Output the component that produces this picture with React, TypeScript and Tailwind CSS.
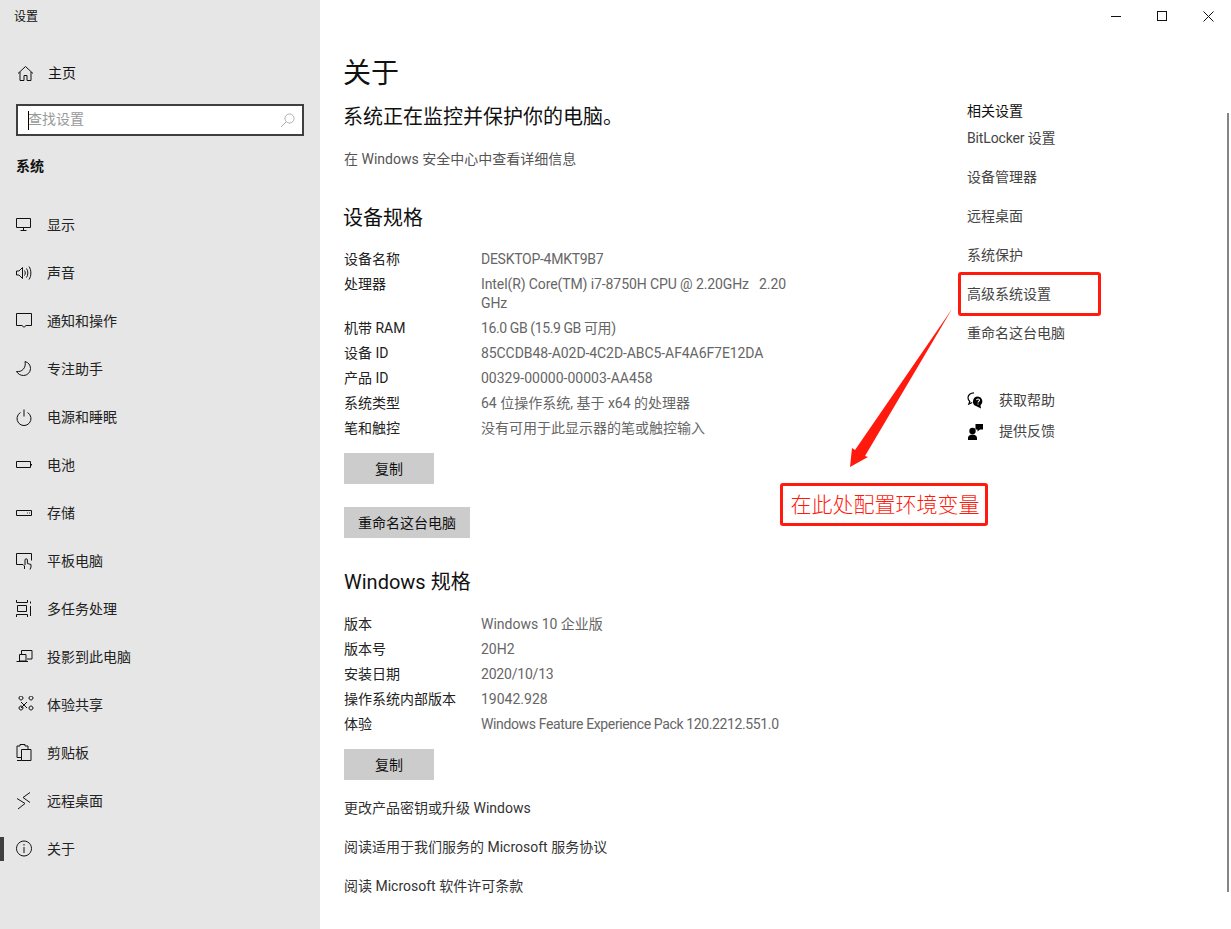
import type { ReactNode } from "react";

const font = { fontFamily: 'Roboto, "Noto Sans CJK SC", sans-serif' };

function Ico({ children }: { children: ReactNode }) {
  return (
    <svg width="18" height="18" viewBox="0 0 18 18" fill="none" stroke="#111" strokeWidth="1" className="shrink-0">
      {children}
    </svg>
  );
}

const navItems: { label: string; icon: ReactNode }[] = [
  { label: "显示", icon: <path d="M.5 2.500h14v9h-14zM7.500 11.500v2.500M4.500 14.500h6" /> },
  {
    label: "声音",
    icon: <path d="M.5 7h2.500L6.500 3.500v11L3 11H.5zM8.500 6.500c1 1.500 1 3.500 0 5M10.500 4.500c1.800 2.500 1.800 6.500 0 9M13 2.500c2.500 3.500 2.500 9.500 0 13" />,
  },
  { label: "通知和操作", icon: <path d="M.5 1.500h15v12h-5.500l-2 1.800-2-1.800h-5.500z" /> },
  { label: "专注助手", icon: <path d="M9 1.500c3.500 1 5.500 3.500 5.500 7a7 7 0 0 1-7 7c-3 0-5.500-1.500-7-4 5 1 10-3.500 8.500-10z" /> },
  { label: "电源和睡眠", icon: <path d="M8 1.500v7M4.500 4.500a7 7 0 1 0 7 0" /> },
  { label: "电池", icon: <path d="M.5 5.500h14v6h-14zM15.500 8v1.500" /> },
  { label: "存储", icon: <path d="M.5 6.500h15v5h-15zM11 9h.8M13 9h.8" /> },
  { label: "平板电脑", icon: <path d="M7 12.500h-6.500v-11h15v7M8.500 17v-3L7 12.500M9 13v-5a1.200 1.200 0 0 1 2.400 0v3.500l3.600 1v2.500l-1 2.500" /> },
  { label: "多任务处理", icon: <path d="M.5 0v2.500h11v-2.500M.5 17v-2.500h11v2.500M1.500 5.500h9v6h-9zM14.500 1.500v2M14.500 6v10" /> },
  { label: "投影到此电脑", icon: <path d="M5.500 6v-3.500h10.500v8.500h-5M3.500 6.500h6.500v6.500h-6.500zM.5 13.500h11.500" /> },
  {
    label: "体验共享",
    icon: <path d="M5 6l6 6M11 6l-6 6M3 2a2 2 0 1 1 0 .01zM13 2a2 2 0 1 1 0 .01zM3 12a2 2 0 1 1 0 .01zM13 12a2 2 0 1 1 0 .01z" />,
  },
  { label: "剪贴板", icon: <path d="M5.500 13.500h-4.500v-11.500h3v-1.500h5v1.500h3v3M5.500 5.500h9.500v11h-9.500zM1 16.500h4.500" /> },
  { label: "远程桌面", icon: <path d="M1 6.500l8 5-7 5.500M14 .5l-7 5 7 5" /> },
  { label: "关于", icon: <path d="M8 1a7.500 7.500 0 1 0 .01 0zM8 7v6M8 4v1.500" /> },
];

// third item: tracking so the Roboto runs end where the Segoe ones do
const deviceSpecs = [
  ["设备名称", "DESKTOP-4MKT9B7", "tracking-[-0.27px]"],
  ["处理器", "Intel(R) Core(TM) i7-8750H CPU @ 2.20GHz   2.20 GHz", "tracking-[-0.1px]"],
  ["机带 RAM", "16.0 GB (15.9 GB 可用)", "tracking-[-0.4px]"],
  ["设备 ID", "85CCDB48-A02D-4C2D-ABC5-AF4A6F7E12DA", "tracking-[-0.08px]"],
  ["产品 ID", "00329-00000-00003-AA458", ""],
  ["系统类型", "64 位操作系统, 基于 x64 的处理器", ""],
  ["笔和触控", "没有可用于此显示器的笔或触控输入", ""],
];

const winSpecs = [
  ["版本", "Windows 10 企业版", ""],
  ["版本号", "20H2", ""],
  ["安装日期", "2020/10/13", "tracking-[-0.2px]"],
  ["操作系统内部版本", "19042.928", ""],
  ["体验", "Windows Feature Experience Pack 120.2212.551.0", "tracking-[-0.37px]"],
];

const related = ["BitLocker 设置", "设备管理器", "远程桌面", "系统保护", "高级系统设置", "重命名这台电脑"];

function SpecRows({ rows }: { rows: string[][] }) {
  return (
    <div className="flex flex-col">
      {rows.map(([k, v, extra]) => (
        <div key={k} className="flex text-sm leading-[19px] mb-[6px]">
          <div className="w-[137px] shrink-0 text-[#222]">{k}</div>
          <div className={`w-[320px] text-[#666] whitespace-pre-wrap ${extra}`}>{v}</div>
        </div>
      ))}
    </div>
  );
}

function Btn({ children, w }: { children: ReactNode; w: string }) {
  return (
    <div className={`${w} h-[31px] bg-[#cccccc] flex items-center justify-center text-sm text-[#111]`}>
      {children}
    </div>
  );
}

export default function App() {
  return (
    <div className="relative flex w-[1231px] h-[929px] overflow-hidden bg-white" style={font}>
      <aside className="w-[320px] shrink-0 bg-[#e6e6e6] relative">
        <div className="h-[34px] pl-[14px] pt-[9px] text-xs leading-4 text-[#111]">设置</div>
        <div className="flex items-center h-[48px] mt-[15px] pl-[17px] gap-[14px] text-sm text-[#111]">
          <svg width="17" height="17" viewBox="0 0 17 17" fill="none" stroke="#111">
            <path d="M1 8.500L8.500 1.500 16 8.500M3 7v8.500h4v-5h3v5h4V7" />
          </svg>
          <span>主页</span>
        </div>
        <div className="mx-[16px] mt-[7px] h-[32px] border-2 border-[#3f3f3f] bg-white flex items-center pl-[10px] pr-[7px] relative">
          <div className="w-px h-[19px] bg-black absolute left-[10px] top-[4.500px]" />
          <span className="flex-1 text-sm leading-[24px] text-[#999] -mt-[2px]">查找设置</span>
          <svg width="15" height="15" viewBox="0 0 15 15" fill="none" stroke="#aaa">
            <path d="M9.500 1a4.500 4.500 0 1 0 .01 0zM6 9L1 14" />
          </svg>
        </div>
        <div className="pl-[16px] mt-[21px] text-sm leading-[18px] font-bold text-[#111]">系统</div>
        <nav className="mt-[26px] flex flex-col">
          {navItems.map((item) => (
            <div key={item.label} className="relative h-[48px] flex items-center pl-[16px] gap-[14px] text-sm text-[#222]">
              {item.label === "关于" && <div className="absolute left-0 top-[12px] h-[24px] w-[4px] bg-[#3f3f3f]" />}
              <Ico>{item.icon}</Ico>
              <span className="-ml-px">{item.label}</span>
            </div>
          ))}
        </nav>
      </aside>

      <main className="flex-1 pl-[24px] pt-[52px] flex">
        <div className="w-[623px] shrink-0">
          <h1 className="text-[28px] leading-[44px] text-[#111] -ml-px">关于</h1>
          <p className="text-[20px] leading-[30px] mt-[6px] text-[#111] -ml-px">系统正在监控并保护你的电脑。</p>
          <p className="text-sm leading-[20px] mt-[17px] text-[#555]">在 Windows 安全中心中查看详细信息</p>
          <h2 className="text-[20px] leading-[30px] mt-[34px] mb-[17px] text-[#111] -ml-px">设备规格</h2>
          <SpecRows rows={deviceSpecs} />
          <div className="mt-[9px]">
            <Btn w="w-[90px]">复制</Btn>
          </div>
          <div className="mt-[23px]">
            <Btn w="w-[126px]">重命名这台电脑</Btn>
          </div>
          <h2 className="text-[20px] leading-[30px] mt-[29px] mb-[18px] text-[#111]">Windows 规格</h2>
          <SpecRows rows={winSpecs} />
          <div className="mt-[9px]">
            <Btn w="w-[90px]">复制</Btn>
          </div>
          <div className="mt-[18px] flex flex-col gap-[19px] text-sm leading-[20px] text-[#333]">
            <span>更改产品密钥或升级 Windows</span>
            <span>阅读适用于我们服务的 Microsoft 服务协议</span>
            <span>阅读 Microsoft 软件许可条款</span>
          </div>
        </div>

        <div className="pt-[49px] w-[200px]">
          <div className="text-sm leading-[20px] text-[#111]">相关设置</div>
          <div className="mt-[7px] flex flex-col gap-[19px] text-sm leading-[20px] text-[#444]">
            {related.map((r) => (
              <span key={r} className={r.startsWith("BitLocker") ? "tracking-[-0.15px]" : ""}>
                {r}
              </span>
            ))}
          </div>
          <div className="mt-[47px] flex items-center gap-[15px] h-[20px] text-sm text-[#444]">
            <svg width="17" height="17" viewBox="0 0 17 17" className="shrink-0">
              <path d="M7 .8C3.500.8 1 3 1 5.800c0 1.500.7 2.800 1.800 3.700L1.800 12l3.400-1.500" fill="none" stroke="#000" strokeWidth="1.200" />
              <path d="M11 4.500a5 5 0 0 0-2 9.600l5 2.400-.5-3.200A5 5 0 0 0 11 4.500z" fill="#000" />
              <path d="M9.500 8.200c.3-1.600 3-1.600 3 0 0 1.200-1.500 1.200-1.500 2.300M11 11.600v1" fill="none" stroke="#fff" strokeWidth="1.100" />
            </svg>
            <span>获取帮助</span>
          </div>
          <div className="mt-[11px] flex items-center gap-[15px] h-[20px] text-sm text-[#444]">
            <svg width="17" height="17" viewBox="0 0 17 17" className="shrink-0" fill="#000">
              <circle cx="5.500" cy="8" r="3.200" />
              <path d="M1 17v-2c0-2 2-3.500 4.500-3.500S10 13 10 15v2zM8.500 1h7.500v5.500h-3l-2.500 2v-2h-2z" />
            </svg>
            <span>提供反馈</span>
          </div>
        </div>
      </main>

      <div className="absolute top-0 right-0 flex">
        <div className="w-[46px] h-[32px] flex items-center justify-center">
          <div className="w-[10px] h-px bg-[#111]" />
        </div>
        <div className="w-[46px] h-[32px] flex items-center justify-center">
          <div className="w-[10px] h-[10px] border border-[#111]" />
        </div>
        <div className="w-[46px] h-[32px] flex items-center justify-center">
          <svg width="11" height="11" viewBox="0 0 11 11" stroke="#111">
            <path d="M.5.500l10 10M10.500.500l-10 10" />
          </svg>
        </div>
      </div>

      {/* scrollbar thumb */}
      <div className="absolute left-[1227px] top-[113px] w-[2px] h-[779px] bg-[#858585]" />

      {/* annotations on top of the screenshot */}
      <div className="absolute left-[958px] top-[272px] w-[143px] h-[44px] border-[3px] border-[#ff1a0d] rounded-[3px]" />
      <svg className="absolute left-[845px] top-[305px]" width="110" height="165" viewBox="0 0 110 165" fill="#ff1a0d">
        <path d="M107 4L20 151l3 1L5 162l2-19 3 2z" />
      </svg>
      <div className="absolute left-[780px] top-[483px] w-[208px] h-[43px] border-[3px] border-[#ff1a0d] rounded-[3px] flex items-center justify-center pl-[2px] pt-[2px] text-[21px] font-light text-[#ff1a0d]">
        在此处配置环境变量
      </div>
    </div>
  );
}
